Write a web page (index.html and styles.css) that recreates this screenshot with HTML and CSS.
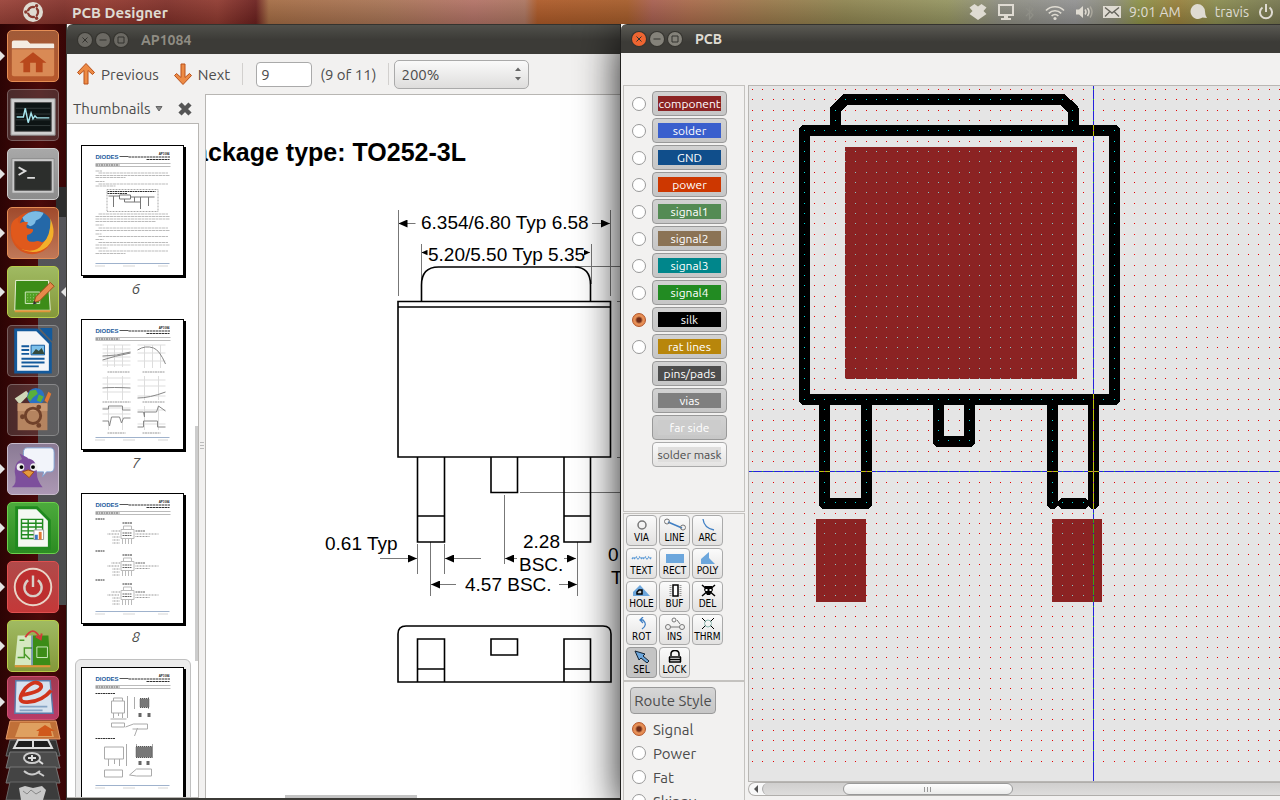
FILE: index.html
```
<!DOCTYPE html>
<html lang="en">
<head>
    <meta charset="UTF-8">
    <meta name="viewport" content="width=device-width, initial-scale=1.0">
    <title>PCB Designer</title>
    <link rel="stylesheet" href="styles.css">
</head>
<body>

    <!-- Top Panel -->
    <header class="panel">
        <div class="panel-logo">
            <svg width="22" height="22" viewBox="0 0 22 22">
                <circle cx="11" cy="11" r="10" fill="#dfdbd2"/>
                <circle cx="11" cy="11" r="5" fill="none" stroke="#8a3a30" stroke-width="2.4"/>
                <g stroke="#dfdbd2" stroke-width="1.4"><path d="M11 11h-8M11 11l4-7M11 11l4 7"/></g>
                <circle cx="11" cy="11" r="3.4" fill="#dfdbd2"/>
                <g fill="#8a3a30"><circle cx="3.8" cy="11" r="1.7"/><circle cx="14.6" cy="4.8" r="1.7"/><circle cx="14.6" cy="17.2" r="1.7"/></g>
            </svg>
        </div>
        <span class="panel-title">PCB Designer</span>
        <nav class="indicators">
            <svg width="18" height="18" viewBox="0 0 18 18"><path fill="#dfdbd2" d="M5.5 1 9 3.6 12.5 1l5 3.6L14.500 8l3 3-3.500 2.500-5 3.500-5-3.500L.5 11l3-3-3-3.400z"/></svg>
            <svg width="18" height="18" viewBox="0 0 18 18"><path fill="none" stroke="#dfdbd2" stroke-width="2" d="M2 2h14v10H2z"/><path fill="#dfdbd2" d="M7 13h4v2h3v2H4v-2h3z"/></svg>
            <svg width="10" height="18" viewBox="0 0 10 18"><path fill="none" stroke="#8f8f87" stroke-width="1.3" d="M1 5l7 7-3.5 4V2L8 6l-7 7"/></svg>
            <svg width="20" height="18" viewBox="0 0 20 18"><g fill="none" stroke="#dfdbd2" stroke-width="1.7"><path d="M1 7.5a12.700 12.700 0 0 1 18 0M3.800 10.300a8.800 8.800 0 0 1 12.400 0M6.600 13a4.900 4.900 0 0 1 6.800 0"/></g><circle cx="10" cy="15.5" r="1.6" fill="#dfdbd2"/></svg>
            <svg width="18" height="18" viewBox="0 0 18 18"><path fill="#dfdbd2" d="M1 6.5h3L8 3v12l-4-3.5H1z"/><path fill="none" stroke="#dfdbd2" stroke-width="1.5" d="M10 6.5q2 2.500 0 5M12.500 5q3 4 0 8"/><path fill="none" stroke="#aaa79c" stroke-width="1.5" d="M15 3.500q4 5.500 0 11"/></svg>
            <svg width="18" height="18" viewBox="0 0 18 18"><path fill="#dfdbd2" d="M0 3h18v12H0z"/><path fill="none" stroke="#66655c" stroke-width="1.4" d="M2 4.5l7 5.500 7-5.500M2 13.500l4.500-4.500M16 13.500L11.500 9"/></svg>
            <span>9:01 AM</span>
            <svg width="18" height="18" viewBox="0 0 18 18"><path fill="#dfdbd2" d="M8.5 1a7.500 7.500 0 0 1 7.500 7.500q0 4 2 6.500l-4.500-.5A7.500 7.500 0 1 1 8.500 1z"/></svg>
            <span>travis</span>
            <svg width="18" height="18" viewBox="0 0 18 18"><path fill="none" stroke="#dfdbd2" stroke-width="2" d="M5.5 4.500a6 6 0 1 0 7 0M9 1v8"/></svg>
        </nav>
    </header>

    <div class="desktop">

        <!-- Launcher -->
        <aside class="launcher">
            <a href="#home" class="tile tile-home running" aria-label="Home Folder">
                <svg viewBox="0 0 52 52"><path fill="#f4ece2" d="M4 12q0-2 2-2h14l3 3h24q1 0 1 1v4H4z"/><path fill="#d98a55" d="M4 19h44v26q0 2-2 2H6q-2 0-2-2z"/><path fill="#b8481c" d="M26 22l14 11h-4v10h-7V33h-6v10h-7V33h-4z"/></svg>
            </a>
            <a href="#monitor" class="tile tile-dim" aria-label="System Monitor">
                <svg viewBox="0 0 52 52"><path fill="#cfcfcf" stroke="#8b8b8b" d="M3 9h46v38H3z"/><path fill="#0d1414" stroke="#555" d="M7 13h38v30H7z"/><path stroke="#333b3b" d="M8 19h36M8 25h36M8 31h36M8 37h36"/><path fill="none" stroke="#a7e6ee" stroke-width="1.5" d="M9 28h7l2-9 3 15 3-10 2 6 2-3 2 2h13"/></svg>
            </a>
            <a href="#terminal" class="tile tile-grey running" aria-label="Terminal">
                <svg viewBox="0 0 52 52"><path fill="#c9c9c9" stroke="#8b8b8b" d="M4 10h44v36H4z"/><path fill="#2c2e2c" stroke="#555" d="M7 13h38v30H7z"/><path fill="none" stroke="#ddd" stroke-width="2" d="M11 19l7 4-7 4M20 30h8"/></svg>
            </a>
            <a href="#firefox" class="tile tile-fox running" aria-label="Firefox">
                <svg viewBox="0 0 52 52"><circle cx="25" cy="26" r="22" fill="#d9541b"/><circle cx="29" cy="20" r="17" fill="#2468a8"/><path fill="#7cbbe4" d="M15 10Q24 0 37 5q-2 6-8 8-1 5-6 6-6-3-8-9z"/><path fill="#f2b02b" d="M44 11q8 18-3 29-12 10-27 3 16 2 23-7 8-9 7-25z"/><path fill="#e0591c" d="M3 20q1-8 8-10-2 4 1 6 4-3 9-1-3 4-1 6l6 1q1 4-6 6-2 8 7 7 7-2 9 2-5 9-18 7Q3 38 3 20z"/></svg>
            </a>
            <a href="#pcb" class="tile tile-green running active" aria-label="PCB Designer">
                <svg viewBox="0 0 52 52"><path fill="#3c8c17" stroke="#e8f0d8" d="M8 14h34l2 31H7z"/><path stroke="#e0953a" stroke-width="2" d="M7 46h37"/><path fill="#4fa024" stroke="#cfe8c0" d="M18 26h15v12H18z"/><path stroke="#9fd080" stroke-dasharray="1 2" d="M20 29h11M20 32h11M20 35h11"/><path fill="#e5894a" stroke="#9c4a1c" d="M27 37l2-6 15-15 4 4-15 15z"/><path fill="#333" d="M26 39l1-4 3 3z"/></svg>
            </a>
            <a href="#writer" class="tile tile-dim" aria-label="Writer">
                <svg viewBox="0 0 52 52"><path fill="#f4f6f8" stroke="#135a9c" stroke-width="3" d="M8 4h22l14 14v30H8z"/><path fill="#135a9c" d="M33 2h13v14z"/><path stroke="#135a9c" stroke-width="2" d="M14 21h8M14 25h8M14 29h8M14 34h24M14 38h24M14 42h18"/><path fill="#7cc0ea" stroke="#135a9c" d="M24 20h14v10H24z"/><path fill="#344a3c" d="M25 29l4-5 3 2 3-3 3 6z"/></svg>
            </a>
            <a href="#software" class="tile tile-dim" aria-label="Software Center">
                <svg viewBox="0 0 52 52"><path fill="#cfd8b8" d="M7 14l12-8 3 4-10 10z"/><circle cx="29" cy="12" r="9" fill="#2b72c4"/><path fill="#59b03c" d="M23 6l6-1 2 4-5 4-3 4-3-4zM32 10l5 2-3 6-4-2z"/><path fill="#e27a35" d="M38 16l4-9 3 2-4 10z"/><path fill="#b58460" d="M10 19h31v28H10z"/><path fill="#c99a74" d="M10 19h31v8H10z"/><circle cx="26" cy="32" r="8" fill="none" stroke="#70412a" stroke-width="3"/><g fill="#70412a"><circle cx="15" cy="33" r="2.5"/><circle cx="32" cy="23" r="2.5"/><circle cx="32" cy="42" r="2.5"/></g></svg>
            </a>
            <a href="#pidgin" class="tile tile-violet running" aria-label="Pidgin">
                <svg viewBox="0 0 52 52"><path fill="#f2f4fa" stroke="#7c9fd0" d="M20 4h24q4 0 4 5v15q0 5-4 5h-4l-4 5 1-5H20q-4 0-4-5V9q0-5 4-5z"/><path fill="#7d4f9c" d="M4 45q6-4 3-16 0-14 13-14 10 0 10 15 0 8 6 15z"/><path fill="#7d4f9c" d="M12 10l8 4 2 3-6 2z"/><circle cx="13" cy="24" r="4" fill="#eee"/><circle cx="27" cy="24" r="4" fill="#eee"/><circle cx="14" cy="24" r="2"/><circle cx="26" cy="24" r="2"/><path fill="#e59a3c" stroke="#9c4a1c" d="M15 29l6-2 6 2-5 6z"/></svg>
            </a>
            <a href="#calc" class="tile tile-calc running" aria-label="Calc">
                <svg viewBox="0 0 52 52"><path fill="#f4f8f2" stroke="#1f8a1f" stroke-width="3" d="M9 5h21l13 13v29H9z"/><path fill="none" stroke="#1f8a1f" stroke-width="1.5" d="M14 17h22v20H14zM14 21h22M14 25h22M14 29h22M14 33h22M21 17v20M29 17v20"/><path fill="#fff" stroke="#999" d="M27 28h10v10H27z"/><path fill="#3b78c2" d="M28 33h3v5h-3z"/><path fill="#e27a35" d="M32 30h3v8h-3z"/></svg>
            </a>
            <a href="#shutdown" class="tile tile-red running" aria-label="Shut Down">
                <svg viewBox="0 0 52 52"><circle cx="26" cy="26" r="19" fill="#bd2f2f" stroke="#e9d5c8" stroke-width="2"/><path fill="none" stroke="#d8cfc8" stroke-width="2.5" d="M21 19a9 9 0 1 0 10 0M26 14v12"/></svg>
            </a>
            <a href="#geda" class="tile tile-green running" aria-label="Schematic">
                <svg viewBox="0 0 52 52"><path fill="#d5e8c0" d="M10 15h16v31H7z"/><path fill="#3c8c17" d="M26 15h16l2 31H26z"/><path stroke="#e0953a" stroke-width="2" d="M7 47h37"/><path fill="none" stroke="#4a9a28" stroke-width="1.5" d="M10 38h7V28h8M17 34l6 6M12 20h5"/><path fill="none" stroke="#cfe8c0" d="M30 27h11v11H30z"/><path fill="none" stroke="#2050a0" d="M25 15v31"/><path fill="none" stroke="#d43a3a" stroke-width="2" d="M18 17q8-13 15 0M29 16l5 3 1-6"/></svg>
            </a>
            <a href="#viewer" class="tile tile-viewer running" aria-label="Document Viewer">
                <svg viewBox="0 0 52 44"><path fill="#d6e2ee" stroke="#5a7aa8" stroke-width="1.5" d="M8 4h36l3 34H7z"/><path fill="none" stroke="#d0341c" stroke-width="4" d="M14 19Q38 15 34 8 28 2 18 12 6 28 22 26 36 25 45 14"/><path stroke="#86a4c4" stroke-width="2" d="M12 31h29M12 35h24"/></svg>
            </a>
            <!-- tiles folded away at the bottom of the launcher -->
            <svg class="folded" viewBox="0 0 56 80" width="56" height="80">
                <path fill="#c07038" stroke="#e59a68" d="M5 1h46l4 18H1z"/><path fill="#dfa060" d="M15 3h30l4 14H10z"/><path fill="#d0591c" d="M40 5l10 6h-4l1 5H33l1-5h-3z"/>
                <path fill="#333" stroke="#6a6a6a" d="M5 20h46l4 16H1z"/><path fill="#1c1c1c" stroke="#ddd" stroke-width="2" d="M13 20h30l4 8H9zM28 20v8"/>
                <path fill="#4b4b4b" stroke="#777" d="M5 32h46l4 16H1z"/><ellipse cx="27" cy="38" rx="8" ry="5" fill="#333" stroke="#ccc" stroke-width="2"/><path stroke="#ddd" stroke-width="2" d="M23 38h8M27 35v6M34 41l4 3"/>
                <path fill="#444" stroke="#777" d="M5 47h46l4 16H1z"/><path fill="none" stroke="#ccc" stroke-width="2" d="M19 51q8 7 16 0M34 53l5 3"/>
                <path fill="#3c3c3c" stroke="#666" d="M5 62h46l4 18H1z"/><path fill="#c8c8c8" d="M14 68l6-2 8 2 9-2 4 4-3 10H16z"/><path fill="none" stroke="#888" d="M18 71l4 3 4-4 5 4 5-3"/>
            </svg>
        </aside>

        <!-- Document Window -->
        <section class="window doc-window">
            <div class="titlebar">
                <button class="win-btn" aria-label="Close"><svg viewBox="0 0 14 14"><path d="M4.5 4.5l5 5M9.5 4.5l-5 5"/></svg></button>
                <button class="win-btn" aria-label="Minimize"><svg viewBox="0 0 14 14"><path d="M3.5 7h7"/></svg></button>
                <button class="win-btn" aria-label="Maximize"><svg viewBox="0 0 14 14"><path d="M4 4h6v6H4z"/></svg></button>
                <h2>AP1084</h2>
            </div>
            <div class="toolbar">
                <button class="tool">
                    <svg width="20" height="24" viewBox="0 0 20 24"><path fill="#ed8b45" stroke="#b9501a" stroke-linejoin="round" d="M10 1.5l8.5 9-2 2-4.5-4V22H8V8.5l-4.500 4-2-2z"/></svg>
                    Previous
                </button>
                <button class="tool">
                    <svg width="20" height="24" viewBox="0 0 20 24"><path fill="#ed8b45" stroke="#b9501a" stroke-linejoin="round" d="M10 22.5l8.5-9-2-2-4.500 4V2H8v13.500l-4.500-4-2 2z"/></svg>
                    Next
                </button>
                <span class="divider"></span>
                <input class="page-input" type="text" value="9" aria-label="Page">
                <span class="page-count">(9 of 11)</span>
                <span class="divider"></span>
                <div class="zoom-box">
                    <select aria-label="Zoom"><option>200%</option></select>
                    <svg width="8" height="14" viewBox="0 0 8 14"><path fill="#666" d="M1 4l3-3.500L7 4zM1 10h6l-3 3.500z"/></svg>
                </div>
            </div>
            <div class="doc-body">
                <div class="sidebar">
                    <div class="sidebar-head">
                        <button class="side-select">Thumbnails <svg width="8" height="6" viewBox="0 0 8 6"><path fill="#888" stroke="#666" d="M1 .5h6L4 5z"/></svg></button>
                        <button class="side-close" aria-label="Close sidebar"><svg width="14" height="14" viewBox="0 0 14 14"><path stroke="#555" stroke-width="4.5" d="M2 2l10 10M12 2L2 12"/></svg></button>
                    </div>
                    <div class="thumbs">
                        <figure>
                            <svg class="page" viewBox="0 0 100 129">
                                <defs>
                                    <g id="page-head">
                                        <text x="13" y="13" class="brand">DIODES</text>
                                        <text x="87" y="9" class="part">AP1084</text>
                                        <path stroke="#555" d="M37 10.5h9"/>
                                        <path stroke="#333" stroke-dasharray="3 .5 2 .5" d="M46 11h42M64 13.5h23"/>
                                        <path stroke="#bbb" d="M13 17.5h75M13 20.5h75"/>
                                        <path stroke="#444" stroke-dasharray="3 .5 1 .5" d="M13 19h24"/>
                                        <path stroke="#9fb2cc" d="M13 117.5h74"/>
                                        <path stroke="#aaa" stroke-dasharray="1 1" d="M13 120h9M41 120h12M76 120h10"/>
                                    </g>
                                </defs>
                                <use href="#page-head"/>
                                <path stroke="#bbb" stroke-dasharray="4 .5 2 .5" d="M13 25h7M16 27h70M13 29.5h74M13 31.5h30M13 35.5h9M16 38h70M13 40h20M16 68h70M13 70.5h74M13 73h74M13 75.5h60M13 79h8M16 82h70M13 84.5h74M13 88h6M16 90.5h70M13 93.5h8M16 96.5h70M13 99h74M13 102h12M16 105h70M13 107.5h30"/>
                                <path stroke="#aaa" stroke-dasharray="1 .5" d="M24.5 43.5h51v22h-51z"/>
                                <path stroke="#333" stroke-dasharray="2 .5" d="M25 45.5h48M25 47.5h20"/>
                                <path stroke="#777" d="M37 49h11v4H37zM26 50h11M48 51h24M31 50v11M52 51v5M58 51v12M66 51v9M42 53v3h16"/>
                            </svg>
                            <figcaption>6</figcaption>
                        </figure>
                        <figure>
                            <svg class="page" viewBox="0 0 100 129">
                                <use href="#page-head"/>
                                <path stroke="#ddd" d="M20 25h28M20 29h28M20 33h28M20 37h28M20 41h28M20 45h28M25 25v22M32 25v22M40 25v22M55 25h28M55 33h28M55 41h28M62 25v23M70 25v23M78 25v23M20 58h28M20 64h28M20 72h28M55 60h28M55 66h28M55 76h28M20 88h28M20 94h28M55 90h28M55 104h28M25 56v24M40 56v24M62 56v24M76 56v24M26 86v24M40 86v24M62 86v24M76 86v24"/>
                                <path stroke="#888" d="M20 40q12-4 28-7M20 36q14 0 28-4M55 30q8-5 16-2 6 2 12 16M20 68q10-1 28 0M55 78q12 0 28-6M20 89h6v-3h14v4h8M20 101h6l1 5 2-9h8l2 6 2-5h7M55 92h6l1 5v-5h12l2-6 7 5M55 107h6v-6h14v6h8"/>
                                <path stroke="#999" stroke-dasharray="2 .5" d="M25 52h22M60 52h22M20 82h28M60 82h22M25 113h18M60 113h18"/>
                            </svg>
                            <figcaption>7</figcaption>
                        </figure>
                        <figure>
                            <svg class="page" viewBox="0 0 100 129">
                                <defs>
                                    <g id="marking">
                                        <path stroke="#333" stroke-dasharray="2 .5" d="M13 0h9M40 4h10"/>
                                        <path stroke="#bbb" d="M38.5 10.5h13v9h-13zM41 10V7h8v3M40 20v5M43 20v5M46 20v5M49 20v5"/>
                                        <path stroke="#666" stroke-dasharray="2 .5" d="M40 14h9M40 16.5h9M53 12h10"/>
                                        <path stroke="#999" stroke-dasharray="1 .5" d="M29 12h9M25 15h12M30 18h7M30 21h7M30 24h7M53 15h23M53 17.5h14"/>
                                    </g>
                                </defs>
                                <use href="#page-head"/>
                                <use href="#marking" y="25"/>
                                <use href="#marking" y="57"/>
                                <use href="#marking" y="86"/>
                            </svg>
                            <figcaption>8</figcaption>
                        </figure>
                        <figure class="selected">
                            <svg class="page" viewBox="0 0 100 129">
                                <use href="#page-head"/>
                                <path stroke="#333" stroke-dasharray="2 .5" d="M13 25.5h20M13 70.5h20"/>
                                <path stroke="#aaa" d="M29 33h13v12H29zM31 33v-3h9v3M31 45v5M36 45v3M40 45v5M29 55h13v4H29zM45 28v22M28 51h16M52 29v12M66 29v12M22 79h19v12H22zM26 91v7M32 91v5M37 91v7M22 102h18v7H22zM44 76v22M54 76v14M70 76v14M43 59l8-3h14v5H50M47 107l7-6h15v7H54zM52 68l3-8"/>
                                <path fill="#777" stroke="#555" stroke-dasharray="1 1" d="M57.5 30.5h9v9h-9zM53.5 78.5h16v11h-16z"/>
                                <path fill="#666" d="M56 45h3v4h-3zM65 45h3v4h-3zM56 93h3v4h-3zM64 93h3v4h-3z"/>
                            </svg>
                        </figure>
                    </div>
                </div>
                <div class="splitter"><svg width="4" height="8" viewBox="0 0 4 8"><path stroke="#bbb" d="M0 .5h4M0 3.5h4M0 6.5h4"/></svg></div>
                <div class="doc-view">
                    <svg class="drawing" width="100%" height="100%">
                        <defs>
                            <marker id="arrow" viewBox="0 0 9 8" refX="9" refY="4" markerWidth="9" markerHeight="8" markerUnits="userSpaceOnUse" orient="auto-start-reverse"><path d="M0 0l9 4-9 4z"/></marker>
                            <marker id="arrow-small" viewBox="0 0 9 8" refX="9" refY="4" markerWidth="6" markerHeight="6" markerUnits="userSpaceOnUse" orient="auto-start-reverse"><path d="M0 0l9 4-9 4z"/></marker>
                        </defs>
                        <g transform="translate(-206 -95)">
                            <text class="doc-title" x="466" y="161">Package type: TO252-3L</text>
                            <g class="dim-lines">
                                <path d="M398.5 210v86M610.5 210v86M421.5 244v40M591.5 244v40M575 266.5h60M617 301.5h20M617 457.5h20M520 492.5h110"/>
                                <path d="M504.5 495v69M417.5 544v30M444.5 544v30M430.5 542v54M577.5 542v54"/>
                                <path marker-start="url(#arrow)" d="M398.5 223.5h17"/>
                                <path marker-end="url(#arrow)" d="M592 223.5h18"/>
                                <path marker-start="url(#arrow-small)" d="M421.5 252.5h5"/>
                                <path marker-end="url(#arrow-small)" d="M586 252.5h4"/>
                                <path marker-end="url(#arrow)" d="M380 558.5h37"/>
                                <path marker-start="url(#arrow)" d="M445 558.5h36"/>
                                <path marker-start="url(#arrow)" d="M505 558.5h12"/>
                                <path marker-end="url(#arrow)" d="M564 558.5h12"/>
                                <path marker-start="url(#arrow)" d="M431 584.5h25"/>
                                <path marker-end="url(#arrow)" d="M559 584.5h18"/>
                            </g>
                            <g class="outline">
                                <path d="M421.5 301v-16q0-18 17-18h136q16 0 16 18v16"/>
                                <path d="M398 301.5h212.5V457H398zM398 307h212"/>
                                <path d="M417.5 457v85h27v-85M417.5 516h27M491 457v35.5h26.5V457M564 457v85h26.5v-85M564 516h26.5"/>
                                <path d="M398 682v-48q0-8 8-8h197q8 0 8 8v48z"/>
                                <path d="M417.5 682v-43h27v43M417.5 669h27M491 639h26.5v16H491zM564 682v-43h26.5v43M564 669h26.5"/>
                            </g>
                            <g class="dim-text">
                                <text x="421" y="229">6.354/6.80 Typ 6.58</text>
                                <text x="428" y="261">5.20/5.50 Typ 5.35</text>
                                <text x="325" y="550">0.61 Typ</text>
                                <text x="523" y="548">2.28</text>
                                <text x="519" y="571">BSC.</text>
                                <text x="465" y="591">4.57 BSC.</text>
                                <text x="608" y="561">0</text>
                                <text x="611" y="584">T</text>
                            </g>
                        </g>
                    </svg>
                    <div class="doc-scroll"></div>
                </div>
            </div>
        </section>

        <!-- PCB Window -->
        <section class="window pcb-window">
            <div class="titlebar focused">
                <button class="win-btn close" aria-label="Close"><svg viewBox="0 0 14 14"><path d="M4.5 4.5l5 5M9.5 4.5l-5 5"/></svg></button>
                <button class="win-btn" aria-label="Minimize"><svg viewBox="0 0 14 14"><path d="M3.5 7h7"/></svg></button>
                <button class="win-btn" aria-label="Maximize"><svg viewBox="0 0 14 14"><path d="M4 4h6v6H4z"/></svg></button>
                <h2>PCB</h2>
            </div>
            <div class="menu-space"></div>
            <div class="pcb-body">
                <div class="controls">
                    <div class="frame layers">
                        <div class="layer"><input type="radio" name="layer" aria-label="component"><button><span class="component">component</span></button></div>
                        <div class="layer"><input type="radio" name="layer" aria-label="solder"><button><span class="solder">solder</span></button></div>
                        <div class="layer"><input type="radio" name="layer" aria-label="GND"><button><span class="gnd">GND</span></button></div>
                        <div class="layer"><input type="radio" name="layer" aria-label="power"><button><span class="power">power</span></button></div>
                        <div class="layer"><input type="radio" name="layer" aria-label="signal1"><button><span class="signal1">signal1</span></button></div>
                        <div class="layer"><input type="radio" name="layer" aria-label="signal2"><button><span class="signal2">signal2</span></button></div>
                        <div class="layer"><input type="radio" name="layer" aria-label="signal3"><button><span class="signal3">signal3</span></button></div>
                        <div class="layer"><input type="radio" name="layer" aria-label="signal4"><button><span class="signal4">signal4</span></button></div>
                        <div class="layer"><input type="radio" name="layer" aria-label="silk" checked><button><span class="silk">silk</span></button></div>
                        <div class="layer"><input type="radio" name="layer" aria-label="rat lines"><button><span class="rats">rat lines</span></button></div>
                        <div class="layer"><button><span class="pins">pins/pads</span></button></div>
                        <div class="layer"><button><span class="vias">vias</span></button></div>
                        <div class="layer"><button><span class="far">far side</span></button></div>
                        <div class="layer"><button class="off"><span class="mask">solder mask</span></button></div>
                    </div>
                    <div class="frame tools">
                        <button><svg viewBox="0 0 26 13"><circle cx="13" cy="7" r="4" fill="none" stroke="#777" stroke-width="1.5"/></svg>VIA</button>
                        <button><svg viewBox="0 0 26 13"><path stroke="#3f7fc4" stroke-width="1.5" d="M6 4l14 6"/><g fill="none" stroke="#777"><circle cx="5" cy="3.5" r="2.5"/><circle cx="21" cy="9.5" r="2.5"/></g></svg>LINE</button>
                        <button><svg viewBox="0 0 26 13"><path fill="none" stroke="#3f7fc4" stroke-width="1.3" d="M8 1q1 9 11 11"/></svg>ARC</button>
                        <button><svg viewBox="0 0 26 13"><path fill="none" stroke="#5c9ad6" stroke-width="1.3" stroke-dasharray="2 1" d="M3 8l1.500-2L6 8l1.500-2L9 8l1.500-2L12 8l1.500-2L15 8l1.500-2L18 8l1.500-2L21 8l1.500-2"/></svg>TEXT</button>
                        <button><svg viewBox="0 0 26 13"><path fill="#6ca6dc" d="M4 3h18v9H4z"/></svg>RECT</button>
                        <button><svg viewBox="0 0 26 13"><path fill="#6ca6dc" d="M6 13V8l8-7v6l6 6z"/></svg>POLY</button>
                        <button><svg viewBox="0 0 26 13"><path fill="#6ca6dc" d="M4 12V8l7-7 10 11z"/><path fill="#ccc" stroke="#000" stroke-width="1.5" d="M8 10V8l2-2h3v4z"/></svg>HOLE</button>
                        <button><svg viewBox="0 0 26 13"><path fill="#fff" stroke="#000" stroke-width="1.5" d="M11 1h5v11h-5z"/><path stroke="#999" stroke-dasharray="1 1" stroke-width="2" d="M8.5 1v11M18.5 1v11"/></svg>BUF</button>
                        <button><svg viewBox="0 0 26 13"><path stroke="#000" stroke-width="1.5" d="M7 1l13 11M20 1L7 12"/><path d="M10 2h7l1 4-3 5h-3L9 6z"/><path fill="#fff" d="M10.500 5h2v2h-2zM14.500 5h2v2h-2z"/></svg>DEL</button>
                        <button><svg viewBox="0 0 26 13"><path fill="none" stroke="#3f7fc4" stroke-width="1.3" d="M13 12q6-4 1-9h-3M14 0l-3 3 3 3"/></svg>ROT</button>
                        <button><svg viewBox="0 0 26 13"><g fill="none" stroke="#777"><circle cx="6" cy="10" r="2.5"/><circle cx="20" cy="10" r="2.5"/><circle cx="12" cy="3" r="2"/><path d="M8.5 10h9M15 3l3 4"/></g></svg>INS</button>
                        <button><svg viewBox="0 0 26 13"><path stroke="#000" d="M7 1l4 4M19 1l-4 4M7 12l4-4M19 12l-4-4"/><circle cx="13" cy="6.5" r="3.5" fill="none" stroke="#8cb8b0"/></svg>THRM</button>
                        <button class="pressed"><svg viewBox="0 0 26 13"><path fill="#6ca6dc" stroke="#123" d="M6 1l10 3-2 2 6 5-2 2-6-5-2 2z"/></svg>SEL</button>
                        <button><svg viewBox="0 0 26 13"><path fill="none" stroke="#000" stroke-width="1.5" d="M9 6V4q0-3.500 4-3.500T17 4v2M7 7h12M7 9.500h12M7 12h12M7.500 7v5M18.500 7v5"/></svg>LOCK</button>
                    </div>
                    <div class="frame routes">
                        <button class="route-btn">Route Style</button>
                        <label><input type="radio" name="route" checked>Signal</label>
                        <label><input type="radio" name="route">Power</label>
                        <label><input type="radio" name="route">Fat</label>
                        <label><input type="radio" name="route">Skinny</label>
                    </div>
                </div>
                <div class="work">
                    <div class="board">
                        <svg width="100%" height="100%" shape-rendering="crispEdges">
                            <defs>
                                <pattern id="grid" x="752" y="89" width="31" height="31" patternUnits="userSpaceOnUse">
                                    <path fill="#00e5e5" d="M0 0h1v1H0zM10 0h1v1h-1zM21 0h1v1h-1zM0 10h1v1H0zM10 10h1v1h-1zM21 10h1v1h-1zM0 21h1v1H0zM10 21h1v1h-1zM21 21h1v1h-1z"/>
                                </pattern>
                            </defs>
                            <rect width="100%" height="100%" fill="#e5e5e5"/>
                            <g transform="translate(-749 -86)">
                                <path fill="#8b2323" d="M845 147h232v232H845zM816 519h50v83h-50zM1052 519h50v83h-50z"/>
                                <g class="silk-lines">
                                    <path d="M804.5 130.5h310v269h-310z"/>
                                    <path d="M835.5 130v-20.5l10-10h217l11 10.500v20"/>
                                    <path d="M824.5 400v103.5h42V400M938.5 400v41.5h31V400M1052.5 400v103.5M1093.5 400v103.5M1063.5 503.5h20"/>
                                </g>
                                <rect class="invert" x="749" y="86" width="100%" height="679" fill="url(#grid)"/>
                                <path class="invert" stroke="#c3c308" d="M749 471.5h4000M1093.5 86v2000"/>
                            </g>
                        </svg>
                    </div>
                    <div class="scrollbar">
                        <button class="scroll-left" aria-label="Scroll left"><svg width="6" height="8" viewBox="0 0 6 8"><path fill="#555" d="M5 0v8L1 4z"/></svg></button>
                        <div class="track"><div class="handle"><svg width="8" height="5" viewBox="0 0 8 5"><path stroke="#999" d="M.5 0v5M3.5 0v5M6.5 0v5"/></svg></div></div>
                    </div>
                </div>
            </div>
        </section>

    </div>

</body>
</html>
```
FILE: styles.css
```
* {
    box-sizing: border-box;
}

body {
    font-family: "Ubuntu", "Open Sans", "Noto Sans", sans-serif;
    font-size: 15px;
    color: #4c4c4c;
    margin: 0;
    height: 100vh;
    display: flex;
    flex-direction: column;
    overflow: hidden;
    background: #3a0606;
}

button,
input,
select {
    font: inherit;
    color: inherit;
    margin: 0;
}

button {
    padding: 0;
    background: none;
    border: none;
}

svg {
    display: block;
    flex: none;
}

/* Top Panel */
.panel {
    position: relative;
    z-index: 3;
    flex: none;
    height: 24px;
    display: flex;
    align-items: center;
    color: #dfdbd2;
    background:
        linear-gradient(rgba(255, 255, 255, 0.06), rgba(0, 0, 0, 0.16)),
        linear-gradient(90deg, #9a4238 0, #84332c 5%, #93392f 8%, #803029 13%, #8f3a30 17%, #6c211f 20%, #a46c44 21%, #a87455 30%, #b27266 37%, #ab7560 41%, #ad5a28 42%, #a55c2a 49%, #a75f50 51%, #a86a4a 54%, #98784a 60%, #8e8450 66%, #949460 74%, #8d8d80 78%, #929292 84%, #8b8b78 87%, #8c9148 89%, #98803c 92%, #8a8c50 95%, #777750 100%);
}

.panel-logo {
    width: 66px;
    display: flex;
    justify-content: center;
}

.panel-title {
    margin-left: 6px;
    font-weight: bold;
}

.indicators {
    margin-left: auto;
    padding-right: 5px;
    display: flex;
    align-items: center;
    gap: 10px;
}

.indicators span {
    font-size: 14px;
}

.indicators span + svg {
    margin-left: -2px;
}

.indicators svg + span {
    margin-left: -2px;
}

/* Desktop */
.desktop {
    flex: 1;
    min-height: 0;
    display: flex;
}

/* Launcher */
.launcher {
    flex: none;
    width: 66px;
    padding: 6px 0 0 7px;
    display: flex;
    flex-direction: column;
    gap: 7px;
    overflow: hidden;
    background:
        linear-gradient(#55555a, #4a4c4c) 38px 193px / 28px 388px no-repeat,
        linear-gradient(#2d2d2d, #2d2d2d) 56px 163px / 10px 30px no-repeat,
        linear-gradient(90deg, #2c0404, #4a0a0a 60%, #380606);
}

.tile {
    position: relative;
    flex: none;
    width: 52px;
    height: 52px;
    border: 1px solid rgba(255, 255, 255, 0.25);
    border-radius: 5px;
}

.tile svg {
    width: 50px;
    height: 50px;
}

.running::before,
.active::after {
    content: "";
    position: absolute;
    top: 20px;
    border: 5px solid transparent;
}

.running::before {
    left: -8px;
    border-left-color: #e4e4e4;
    border-right-width: 0;
}

.active::after {
    right: -8px;
    border-right-color: #e4e4e4;
    border-left-width: 0;
}

.tile-home { background: linear-gradient(#a05a38, #b8582c); border-color: #e58e55; }
.tile-dim { background: rgba(130, 130, 130, 0.3); }
.tile-grey { background: linear-gradient(#a8a8a8, #8c8c8c); border-color: #ccc; }
.tile-fox { background: linear-gradient(#a04a2c, #c07858); border-color: #e58e55; }
.tile-green { background: linear-gradient(#a0ba62, #84983a); border-color: #b8cc4a; }
.tile-violet { background: linear-gradient(#8a7a94, #ac98b4); border-color: #c8bccc; }
.tile-calc { background: linear-gradient(#4caa3c, #2c8c22); border-color: #6cd04c; }
.tile-red { background: linear-gradient(#b04a4a, #c43838); border-color: #e05050; }
.tile-viewer { height: 44px; margin-top: -3px; background: linear-gradient(#a03a50, #b83c68); border-color: #d05070; }
.tile-viewer svg { height: 42px; }

.folded {
    margin: -7px 0 0 -2px;
}

/* Windows */
.window {
    min-width: 0;
    display: flex;
    flex-direction: column;
    background: #f2f1f0;
}

.doc-window {
    flex: 553 1 0;
    border-left: 1px solid #3c3b37;
    border-bottom: 2px solid #3c3b37;
}

.pcb-window {
    flex: 659 1 0;
    position: relative;
    z-index: 2;
    border-left: 1px solid #22211f;
    box-shadow: 0 10px 40px rgba(0, 0, 0, 0.9);
}

.titlebar {
    flex: none;
    height: 30px;
    padding-left: 11px;
    display: flex;
    align-items: center;
    gap: 4px;
    color: #8f8c83;
    background: linear-gradient(#50504b, #3c3b37 50%);
    border-top: 1px solid #34332f;
    border-top-left-radius: 6px;
}

.titlebar h2 {
    margin: 0 0 0 9px;
    font-size: 14px;
    font-weight: bold;
}

.titlebar.focused {
    height: 29px;
    color: #dfdbd2;
    background: linear-gradient(#5a5953, #3c3b37 60%);
}

.win-btn {
    width: 14px;
    height: 14px;
    border-radius: 50%;
    background: #6b6963;
    box-shadow: 0 0 0 1px #35342f;
}

.win-btn svg {
    fill: none;
    stroke: #33322e;
}

.focused .win-btn {
    background: #84827a;
}

.focused .win-btn.close {
    background: #ee6531;
}

/* Document toolbar */
.toolbar {
    flex: none;
    height: 40px;
    padding-left: 9px;
    display: flex;
    align-items: center;
}

.tool {
    display: flex;
    align-items: center;
    gap: 5px;
    margin-right: 14px;
}

.divider {
    width: 1px;
    height: 22px;
    background: #d2d0ce;
    margin: 0 13px 0 -2px;
}

.page-input {
    width: 56px;
    height: 25px;
    padding: 0 4px;
    border: 1px solid #aaa;
    border-radius: 4px;
    background: #fff;
}

.page-count {
    margin: 0 12px 0 8px;
}

.page-count + .divider {
    margin: 0 5px 0 0;
}

.zoom-box {
    width: 135px;
    display: grid;
    align-items: center;
}

.zoom-box > * {
    grid-area: 1 / 1;
}

.zoom-box select {
    appearance: none;
    height: 29px;
    padding: 0 6px;
    border: 1px solid #aaa;
    border-radius: 5px;
    background: linear-gradient(#fafafa, #dedddc);
}

.zoom-box svg {
    justify-self: end;
    margin-right: 7px;
    pointer-events: none;
}

/* Document body */
.doc-body {
    flex: 1;
    min-height: 0;
    display: flex;
}

.sidebar {
    flex: none;
    width: 132px;
    display: flex;
    flex-direction: column;
}

.sidebar-head {
    flex: none;
    height: 29px;
    padding: 0 7px 0 6px;
    display: flex;
    align-items: center;
    justify-content: space-between;
}

.side-select {
    display: flex;
    align-items: center;
    gap: 4px;
}

.thumbs {
    flex: 1;
    min-height: 0;
    overflow: hidden;
    padding-top: 13px;
    background: linear-gradient(#ccc, #ccc) right 0 top 302px / 3px 235px no-repeat, #fff;
    border: 1px solid #b8b6b3;
    border-left: none;
}

.thumbs figure {
    width: 116px;
    height: 174px;
    margin: 0 0 0 8px;
    padding: 8px 0 0 6px;
    display: flex;
    flex-direction: column;
}

.thumbs .selected {
    padding: 7px 0 0 5px;
    border: 1px solid #c0c0c0;
    border-radius: 6px;
    background: #ececec;
}

.page {
    width: 103px;
    height: 131px;
    background: #fff;
    border: 1px solid #000;
    box-shadow: 2px 2px 0 #000;
    fill: none;
}

.brand {
    font: bold 6px "Liberation Sans", sans-serif;
    fill: #1c5a9c;
}

.part {
    font: bold 3px "Liberation Sans", sans-serif;
    text-anchor: end;
    fill: #222;
}

.thumbs figcaption {
    width: 110px;
    line-height: 26px;
    text-align: center;
    font-style: italic;
}

.splitter {
    flex: none;
    width: 6px;
    display: flex;
    align-items: center;
    justify-content: center;
}

.doc-view {
    flex: 1;
    min-width: 0;
    display: flex;
    flex-direction: column;
    background: #fff;
    border-top: 1px solid #b8b6b3;
    border-left: 1px solid #b8b6b3;
}

.drawing {
    flex: 1;
    min-height: 0;
    overflow: hidden;
}

.doc-scroll {
    height: 3px;
    width: 32%;
    margin-left: 19%;
    background: #c4c4c4;
}

.doc-title {
    font: bold 25px "Liberation Sans", Arial, sans-serif;
    text-anchor: end;
    fill: #000;
}

.dim-text {
    font: 19px "Liberation Sans", Arial, sans-serif;
    fill: #000;
}

.dim-lines {
    fill: none;
    stroke: #777;
    stroke-width: 1px;
}

.dim-lines path,
.outline path {
    vector-effect: non-scaling-stroke;
}

.outline {
    fill: none;
    stroke: #000;
    stroke-width: 1.6;
}

/* PCB window */
.menu-space {
    flex: none;
    height: 32px;
}

.pcb-body {
    flex: 1;
    min-height: 0;
    display: flex;
    gap: 3px;
    padding-left: 2px;
}

.controls {
    flex: none;
    width: 122px;
    display: flex;
    flex-direction: column;
    overflow: hidden;
}

.frame {
    flex: none;
    border: 1px solid #c4c2bf;
}

.layers {
    height: 427px;
    padding: 5px 0 0 8px;
    display: flex;
    flex-direction: column;
    gap: 2px;
}

.layer {
    display: flex;
    align-items: center;
    justify-content: flex-end;
    padding-right: 17px;
}

.layer input {
    margin-right: auto;
}

.layer button {
    width: 75px;
    height: 25px;
    padding: 0 5px;
    border: 1px solid #999;
    border-radius: 4px;
    background: linear-gradient(#d2d2d2, #c6c6c6);
}

.layer .off {
    background: linear-gradient(#fafafa, #e4e3e2);
    border-color: #aaa;
}

.layer span {
    display: flex;
    align-items: center;
    justify-content: center;
    height: 15px;
    font-size: 12px;
    white-space: nowrap;
    color: #fff;
}

.component { background: #8b2323; }
.solder { background: #3a5fcd; }
.gnd { background: #104e8b; }
.power { background: #cd3700; }
.signal1 { background: #548b54; }
.signal2 { background: #8b7355; }
.signal3 { background: #00868b; }
.signal4 { background: #228b22; }
.silk { background: #000; }
.rats { background: #b8860b; }
.pins { background: #4d4d4d; }
.vias { background: #7f7f7f; }
.far { background: #ccc; }
.layer .mask { background: #dfdedd; color: #4c4c4c; }

input[type="radio"] {
    appearance: none;
    flex: none;
    width: 14px;
    height: 14px;
    border: 1px solid #999;
    border-radius: 50%;
    background: #fff;
}

input[type="radio"]:checked {
    border-color: #b3562a;
    background: radial-gradient(circle, #6e2c18 0 2px, #e8935a 4px, #e07c40);
}

.tools {
    height: 168px;
    margin-top: 1px;
    padding: 1px 0 0 2px;
    display: grid;
    grid-template-columns: repeat(3, 31px);
    grid-auto-rows: 31px;
    gap: 2px;
}

.tools button {
    display: flex;
    flex-direction: column;
    align-items: center;
    justify-content: center;
    gap: 1px;
    border: 1px solid #aaa;
    border-radius: 4px;
    background: linear-gradient(#fbfbfb, #e2e1e0);
    font: 10px/12px "DejaVu Sans Condensed", "DejaVu Sans", sans-serif;
    color: #000;
}

.tools svg {
    width: 26px;
    height: 13px;
}

.tools .pressed {
    background: #c4c4c4;
    border-color: #999;
}

.routes {
    flex: 1;
    padding: 5px 0 0 6px;
}

.route-btn {
    display: block;
    width: 86px;
    height: 27px;
    margin-bottom: 3px;
    border: 1px solid #999;
    border-radius: 4px;
    background: linear-gradient(#d6d6d6, #c6c6c6);
}

.routes label {
    display: flex;
    align-items: center;
    gap: 7px;
    height: 24px;
    padding-left: 2px;
}

/* Board */
.work {
    flex: 1;
    min-width: 0;
    display: flex;
    flex-direction: column;
    padding-bottom: 4px;
}

.board {
    flex: 1;
    min-height: 0;
    border: 1px solid #b8b6b3;
    border-right: none;
    isolation: isolate;
}

.silk-lines {
    fill: none;
    stroke: #000;
    stroke-width: 11px;
    stroke-linecap: round;
    stroke-linejoin: round;
}

.invert {
    mix-blend-mode: difference;
}

.scrollbar {
    flex: none;
    height: 14px;
    display: flex;
    border: 1px solid #b0aeab;
    border-right: none;
    border-radius: 7px 0 0 7px;
    background: #f8f8f8;
}

.scroll-left {
    width: 13px;
    display: flex;
    align-items: center;
    justify-content: center;
}

.track {
    flex: 1;
    padding-left: 15%;
    border-left: 1px solid #aaa;
    border-radius: 7px 0 0 7px;
    background: linear-gradient(#d0cfce, #dedddc);
}

.handle {
    width: 39%;
    height: 12px;
    display: flex;
    align-items: center;
    justify-content: center;
    border: 1px solid #999;
    border-radius: 6px;
    background: linear-gradient(#fdfdfd, #ebebea);
}
```
